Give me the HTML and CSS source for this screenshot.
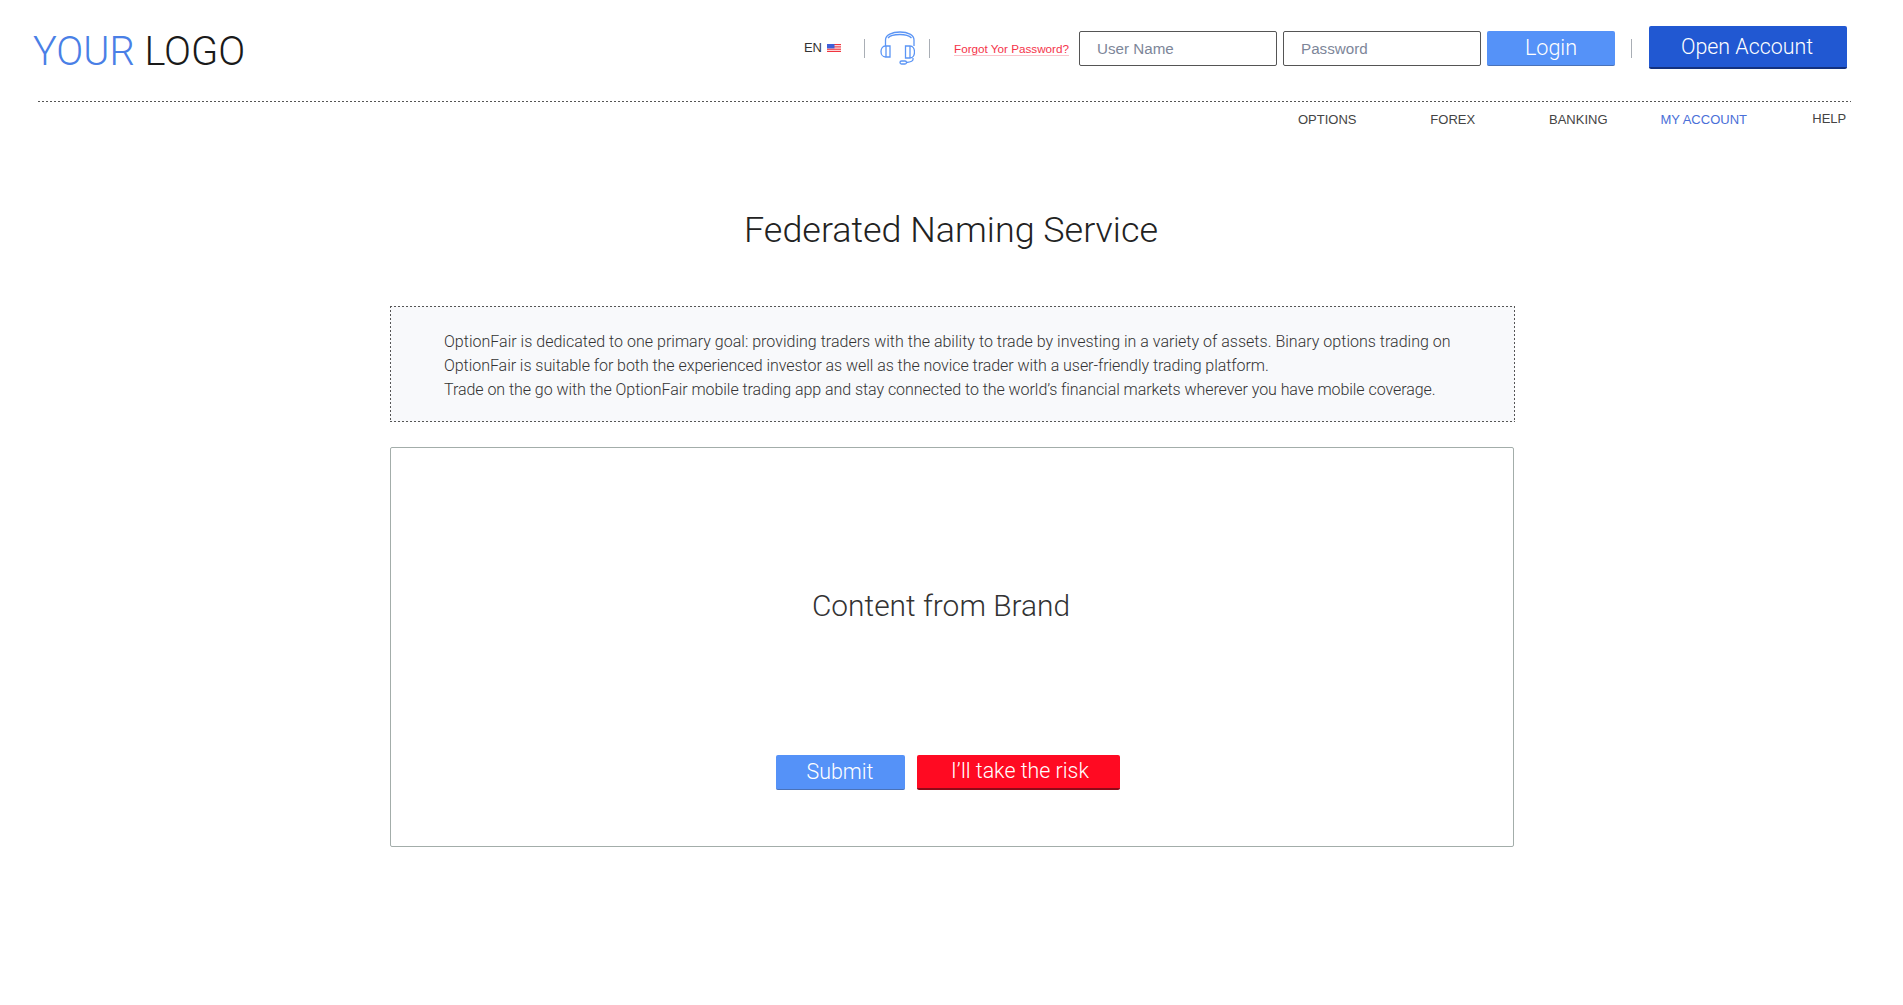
FILE: index.html
```html
<!DOCTYPE html>
<html lang="en">
<head>
<meta charset="utf-8">
<title>Federated Naming Service</title>
<link rel="stylesheet" href="styles.css">
</head>
<body>
<header class="top">
  <a class="logo" href="#"><span class="logo-your">YOUR</span> LOGO</a>
  <div class="top-tools">
    <div class="lang">EN
      <svg class="flag" width="14" height="8" viewBox="0 0 14 8" aria-hidden="true">
        <rect width="14" height="8" fill="#fff"/>
        <rect width="14" height="1.2" y="0" fill="#f0353f"/>
        <rect width="14" height="1.2" y="2.3" fill="#f0353f"/>
        <rect width="14" height="1.2" y="4.6" fill="#f0353f"/>
        <rect width="14" height="1.2" y="6.8" fill="#f0353f"/>
        <rect width="7.5" height="4.4" fill="#3f5fd8"/>
      </svg>
    </div>
    <span class="sep sep-a"></span>
    <svg class="headset" width="35" height="34" viewBox="5 6 35 34" fill="none" stroke="#5b95f5" stroke-width="1.3" aria-hidden="true">
      <path d="M10.5 21 V15 C10.5 10 17 7 25 7 C33 7 39 10 39 15 V21"/>
      <path d="M13 13 C15 10.5 20 9.5 25 9.5 C30 9.5 34 10.5 36.5 13"/>
      <path d="M15 21 H10.5 C7.5 21 6 24 6 26.5 C6 29 7.5 32 10.5 32 H15 Z"/>
      <path d="M11 21 V32"/>
      <path d="M30.5 21 H35 C38 21 39.5 24 39.5 27 C39.5 30 38 33 35 33 H30.5 Z"/>
      <path d="M35 21 V33"/>
      <path d="M38 33 V34.5 C38 36 36 37 31.5 37.5"/>
      <rect x="25" y="36" width="6.5" height="3" rx="1.5"/>
    </svg>
    <span class="sep sep-b"></span>
    <a class="forgot" href="#">Forgot Yor Password?</a>
    <input class="field" type="text" placeholder="User Name">
    <input class="field field-pass" type="password" placeholder="Password">
    <button class="btn btn-login" type="button">Login</button>
    <span class="sep sep-c"></span>
    <button class="btn btn-open" type="button">Open Account</button>
  </div>
</header>
<div class="rule"></div>
<nav class="nav">
  <a href="#">OPTIONS</a>
  <a href="#">FOREX</a>
  <a href="#">BANKING</a>
  <a class="active" href="#">MY ACCOUNT</a>
  <a class="nav-help" href="#">HELP</a>
</nav>
<main class="main">
  <h1 class="title">Federated Naming Service</h1>
  <section class="notice">
    <p class="line line-1">OptionFair is dedicated to one primary goal: providing traders with the ability to trade by investing in a variety of assets. Binary options trading on</p>
    <p class="line line-2">OptionFair is suitable for both the experienced investor as well as the novice trader with a user-friendly trading platform.</p>
    <p class="line line-3">Trade on the go with the OptionFair mobile trading app and stay connected to the world’s financial markets wherever you have mobile coverage.</p>
  </section>
  <section class="content">
    <h2 class="brand">Content from Brand</h2>
    <div class="actions">
      <button class="btn btn-submit" type="button">Submit</button>
      <button class="btn btn-risk" type="button">I’ll take the risk</button>
    </div>
  </section>
</main>
</body>
</html>
```
FILE: styles.css
```css
* { box-sizing: border-box; }
html, body { margin: 0; padding: 0; background: #fff; }
body { font-family: Roboto, "Liberation Sans", sans-serif; font-weight: 300; color: #222; height: 1005px; overflow: hidden; }
a { text-decoration: none; color: inherit; }

.top { display: flex; align-items: flex-start; justify-content: space-between; height: 101px; padding: 0 56px 0 33px; }
.logo { margin-top: 28px; font-size: 39.8px; line-height: 48px; color: #1a1a1a; white-space: nowrap; }
.logo-your { color: #4a7fe6; }

.top-tools { display: flex; align-items: center; margin-top: 26px; height: 43px; }
.lang { display: flex; align-items: center; font-family: "Liberation Sans", sans-serif; font-weight: 400; font-size: 13px; color: #333; }
.flag { margin-left: 5px; margin-top: 1px; }
.sep { width: 1px; height: 19px; background: #a9aeb5; flex: none; margin-top: 1px; }
.sep-a { margin-left: 23px; }
.headset { margin-left: 15px; flex: none; }
.sep-b { margin-left: 14px; }
.sep-c { margin-left: 16px; }
.forgot { margin-left: 24px; margin-top: 2px; font-family: "Liberation Sans", sans-serif; font-weight: 400; font-size: 11.7px; line-height: 13px; color: #f5334a; border-bottom: 1px solid #fbc4cb; white-space: nowrap; }
.field { width: 198px; height: 35px; margin-left: 10px; margin-top: 2px; padding: 0 17px 1px; border: 1px solid #555; border-radius: 2px; background: #fff; font-family: "Liberation Sans", sans-serif; font-weight: 400; font-size: 15.2px; color: #7d8699; outline: none; }
.field::placeholder { color: #7d8699; opacity: 1; }
.field-pass { margin-left: 6px; }

.btn { display: block; border: 0; border-radius: 2px; color: #fff; font-family: Roboto, sans-serif; font-weight: 300; cursor: pointer; padding: 0; }
.btn-login { width: 128px; height: 35px; margin-left: 6px; margin-top: 2px; padding-bottom: 2px; background: #5592f8; border-bottom: 1px solid #4a72b8; font-size: 21.6px; }
.btn-open { width: 198px; height: 43px; margin-left: 17px; padding-right: 2px; background: #2158d2; border-bottom: 2px solid #13317f; font-size: 21.4px; }

.rule { height: 1px; margin: 0 52px 0 38px; background: linear-gradient(to right, #555 0 2px, transparent 2px) 0 0 / 4px 1px repeat-x; }

.nav { display: flex; justify-content: flex-end; padding-right: 11px; margin-top: 9px; }
.nav a { width: 125.5px; text-align: center; font-family: "Liberation Sans", sans-serif; font-weight: 400; font-size: 13px; line-height: 17px; color: #444; }
.nav .active { color: #4a6fd8; }
.nav .nav-help { margin-top: -1px; }

.main { width: 1125px; margin-left: 390px; }
.title { margin: 81px 3px 0 0; text-align: center; font-size: 35.9px; line-height: 42px; font-weight: 300; color: #222; }
.notice {
  height: 116px; margin-top: 55px; padding: 24px 30px 0 54px; background-color: #f8f9fb;
  background-image:
    linear-gradient(to right, #555 0 2px, transparent 2px),
    linear-gradient(to right, #555 0 2px, transparent 2px),
    linear-gradient(to bottom, #555 0 2px, transparent 2px),
    linear-gradient(to bottom, #555 0 2px, transparent 2px);
  background-size: 4px 1px, 4px 1px, 1px 4px, 1px 4px;
  background-position: 0 0, 0 100%, 0 0, 100% 0;
  background-repeat: repeat-x, repeat-x, repeat-y, repeat-y;
}
.line { margin: 0; font-size: 16px; line-height: 24px; color: #333; white-space: nowrap; }
.line-1 { letter-spacing: 0.016px; }
.line-2 { letter-spacing: -0.05px; }
.line-3 { letter-spacing: -0.05px; }
.content { display: flex; flex-direction: column; align-items: center; height: 400px; margin: 25px 1px 0 0; padding-top: 140px; border: 1px solid #a3adaa; border-radius: 2px; }
.brand { margin: 0 22px 0 0; font-size: 29.9px; line-height: 35px; font-weight: 300; color: #333; }
.actions { display: flex; gap: 12px; margin-top: 132px; margin-right: 9px; }
.btn-submit { width: 129px; height: 35px; padding-bottom: 2px; background: #5592f8; border-bottom: 1px solid #4a72b8; font-size: 21.4px; }
.btn-risk { width: 203px; height: 35px; padding: 0 0 2px 4px; background: #ff0a22; border-bottom: 2px solid #8f0a18; font-size: 21.4px; }
```
